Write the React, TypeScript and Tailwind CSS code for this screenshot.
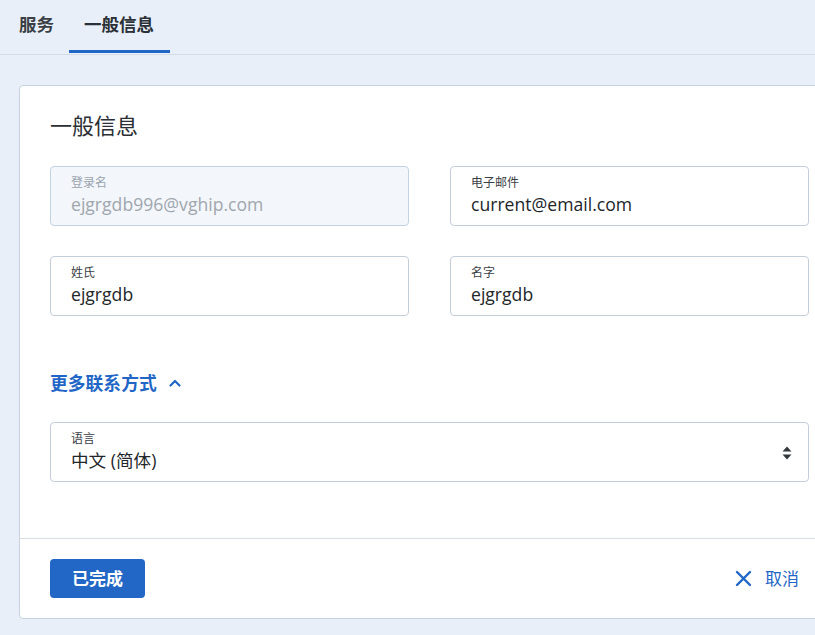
import React from "react";

const font = { fontFamily: '"Open Sans", "Noto Sans CJK SC", sans-serif' };

function Field({ label, value, disabled }: { label: string; value: string; disabled?: boolean }) {
  return (
    <div
      className={`h-[60px] rounded-[4px] border px-[20px] pt-[7px] ${
        disabled ? "border-[#c3d2e2] bg-[#f3f6fb]" : "border-[#c3ceda] bg-white"
      }`}
    >
      <div className={`text-[12px] leading-[18px] ${disabled ? "text-[#9aa3ad]" : "text-[#3b4045]"}`}>{label}</div>
      <div className={`text-[17.6px] leading-[24px] ${disabled ? "text-[#a0a6ad]" : "text-[#22262a]"}`}>{value}</div>
    </div>
  );
}

export default function App() {
  return (
    <div className="w-[815px] h-[635px] overflow-hidden bg-[#e8eff8]" style={font}>
      <div className="flex h-[55px] border-b border-[#d3dde8] pl-[19px]">
        <div className="flex items-center h-full pb-[5px] text-[17.5px] font-bold text-[#3a3f45] pr-[15px]">服务</div>
        <div className="relative flex items-center h-full pb-[5px] pl-[15px] pr-[16px] text-[17.5px] font-bold text-[#2b3036]">
          一般信息
          <div className="absolute left-0 right-0 bottom-[1px] h-[3px] bg-[#1f66c6]" />
        </div>
      </div>
      <div className="pt-[30px] pl-[19px]">
        <div className="w-[821px] rounded-[4px] border border-[#c7d2de] bg-white">
          <div className="px-[30px] pt-[23px] pb-[56px]">
            <div className="text-[22px] leading-[32px] text-[#2b2f33]">一般信息</div>
            <div className="mt-[25px] grid grid-cols-2 gap-x-[41px] gap-y-[30px]">
              <Field label="登录名" value="ejgrgdb996@vghip.com" disabled />
              <Field label="电子邮件" value="current@email.com" />
              <Field label="姓氏" value="ejgrgdb" />
              <Field label="名字" value="ejgrgdb" />
            </div>
            <div className="mt-[55px] flex items-center gap-[11px] text-[17.8px] leading-[24px] font-bold text-[#1f66c6]">
              <span>更多联系方式</span>
              <svg width="14" height="14" viewBox="0 0 14 14" fill="none">
                <path d="M2.5 9.5 L7 5 L11.5 9.5" stroke="#1f66c6" strokeWidth="2.2" strokeLinecap="round" strokeLinejoin="round" />
              </svg>
            </div>
            <div className="mt-[27px] relative h-[60px] rounded-[4px] border border-[#c3ceda] bg-white px-[20px] pt-[7px]">
              <div className="text-[12px] leading-[18px] text-[#3b4045]">语言</div>
              <div className="text-[17.6px] leading-[24px] text-[#22262a]">中文 (简体)</div>
              <svg className="absolute right-[16px] top-[22px]" width="10" height="16" viewBox="0 0 10 16">
                <path d="M5 1.5 L9.5 6.5 H0.5 Z" fill="#33383d" />
                <path d="M5 14.5 L9.5 9.5 H0.5 Z" fill="#33383d" />
              </svg>
            </div>
          </div>
          <div className="border-t border-[#d8dee5] px-[30px] pt-[20px] pb-[20px] flex items-center justify-between">
            <button className="h-[39px] w-[95px] rounded-[4px] bg-[#2267c5] text-[17px] font-bold text-white">已完成</button>
            <button className="flex items-center gap-[13px] pr-[10px] text-[17px] text-[#1f66c6]">
              <svg width="17" height="17" viewBox="0 0 17 17">
                <path d="M2 2 L15 15 M15 2 L2 15" stroke="#1f66c6" strokeWidth="2.4" strokeLinecap="round" />
              </svg>
              <span>取消</span>
            </button>
          </div>
        </div>
      </div>
    </div>
  );
}
